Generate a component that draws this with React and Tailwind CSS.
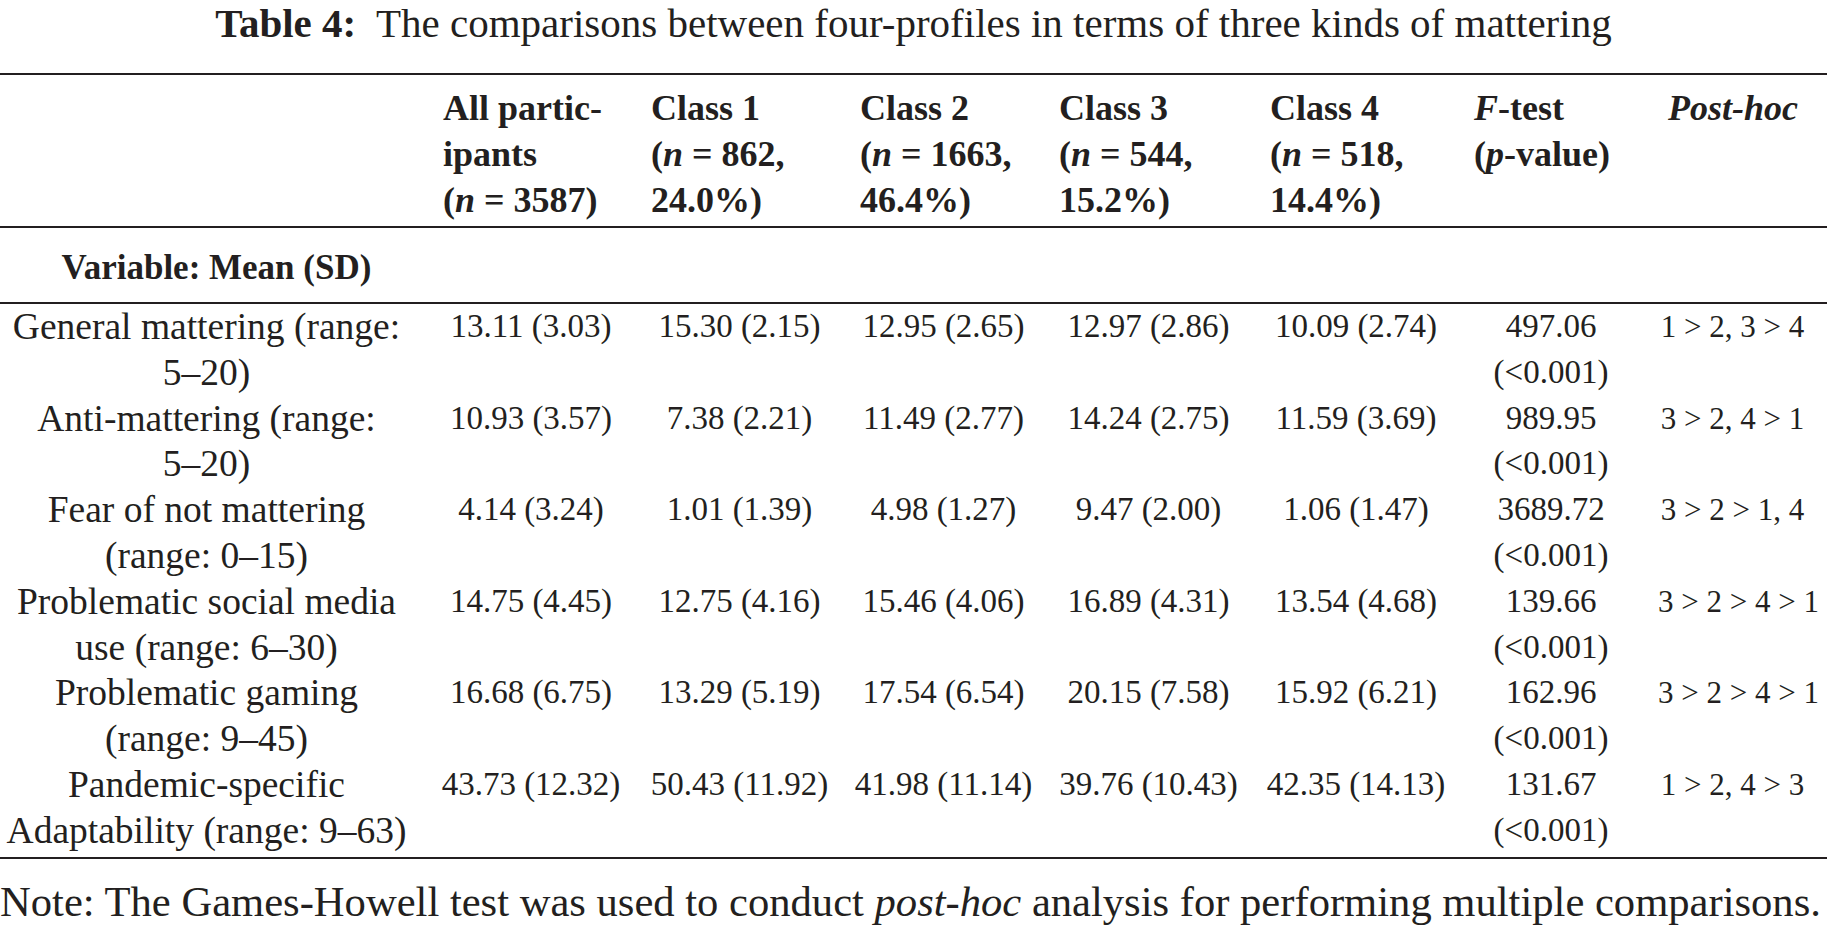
import React from 'react';

const cols = 'grid grid-cols-[433px_208px_209px_199px_211px_204px_194px_169px]';

const rows = [
  {
    label: ['General mattering (range:', '5–20)'],
    vals: ['13.11 (3.03)', '15.30 (2.15)', '12.95 (2.65)', '12.97 (2.86)', '10.09 (2.74)'],
    f: '497.06',
    post: '1 > 2, 3 > 4',
  },
  {
    label: ['Anti-mattering (range:', '5–20)'],
    vals: ['10.93 (3.57)', '7.38 (2.21)', '11.49 (2.77)', '14.24 (2.75)', '11.59 (3.69)'],
    f: '989.95',
    post: '3 > 2, 4 > 1',
  },
  {
    label: ['Fear of not mattering', '(range: 0–15)'],
    vals: ['4.14 (3.24)', '1.01 (1.39)', '4.98 (1.27)', '9.47 (2.00)', '1.06 (1.47)'],
    f: '3689.72',
    post: '3 > 2 > 1, 4',
  },
  {
    label: ['Problematic social media', 'use (range: 6–30)'],
    vals: ['14.75 (4.45)', '12.75 (4.16)', '15.46 (4.06)', '16.89 (4.31)', '13.54 (4.68)'],
    f: '139.66',
    post: '3 > 2 > 4 > 1',
  },
  {
    label: ['Problematic gaming', '(range: 9–45)'],
    vals: ['16.68 (6.75)', '13.29 (5.19)', '17.54 (6.54)', '20.15 (7.58)', '15.92 (6.21)'],
    f: '162.96',
    post: '3 > 2 > 4 > 1',
  },
  {
    label: ['Pandemic-specific', 'Adaptability (range: 9–63)'],
    vals: ['43.73 (12.32)', '50.43 (11.92)', '41.98 (11.14)', '39.76 (10.43)', '42.35 (14.13)'],
    f: '131.67',
    post: '1 > 2, 4 > 3',
  },
];

function N() {
  return <i className="italic">n</i>;
}

function HeadCell({ children }) {
  return <div className="pl-[10px] text-left whitespace-nowrap">{children}</div>;
}

function Rule() {
  return <div className="h-[2px] w-full bg-[#231f20]" />;
}

export default function App() {
  return (
    <div className="w-[1827px] h-[937px] overflow-hidden bg-white text-[#231f20] font-['Liberation_Serif',serif]">
      <div className="text-center text-[41px] leading-[46px] whitespace-nowrap">
        <span className="font-bold">Table 4:</span>&nbsp; The comparisons between four-profiles in terms of three kinds of mattering
      </div>

      <div className="mt-[27px]">
        <Rule />
        <div className={`${cols} pt-[10px] pb-[3px] text-[36px] leading-[46px] font-bold`}>
          <div />
          <HeadCell>
            All partic-<br />ipants<br />(<N /> = 3587)
          </HeadCell>
          <HeadCell>
            Class 1<br />(<N /> = 862,<br />24.0%)
          </HeadCell>
          <HeadCell>
            Class 2<br />(<N /> = 1663,<br />46.4%)
          </HeadCell>
          <HeadCell>
            Class 3<br />(<N /> = 544,<br />15.2%)
          </HeadCell>
          <HeadCell>
            Class 4<br />(<N /> = 518,<br />14.4%)
          </HeadCell>
          <HeadCell>
            <i>F</i>-test<br />(<i>p</i>-value)
          </HeadCell>
          <HeadCell>
            <i>Post-hoc</i>
          </HeadCell>
        </div>
        <Rule />
        <div className={`${cols} pt-[17px] pb-[11px] leading-[46px]`}>
          <div className="text-center text-[35px] font-bold">Variable: Mean (SD)</div>
        </div>
        <Rule />
        <div className="pb-[3px]">
          {rows.map((r, i) => (
            <div key={i} className={`${cols} leading-[45.8px]`}>
              <div className="pr-5 text-center text-[37.5px] whitespace-nowrap">
                {r.label[0]}
                <br />
                {r.label[1]}
              </div>
              {r.vals.map((v, j) => (
                <div key={j} className="pr-3 text-center text-[33px] whitespace-nowrap">
                  {v}
                </div>
              ))}
              <div className="pr-5 text-center text-[33px] whitespace-nowrap">
                {r.f}
                <br />
                (&lt;0.001)
              </div>
              <div className="pr-5 text-center text-[31px] whitespace-nowrap">{r.post}</div>
            </div>
          ))}
        </div>
        <Rule />
      </div>

      <div className="mt-[20px] text-[42.6px] leading-[46px] whitespace-nowrap">
        Note: The Games-Howell test was used to conduct <i>post-hoc</i> analysis for performing multiple comparisons.
      </div>
    </div>
  );
}
